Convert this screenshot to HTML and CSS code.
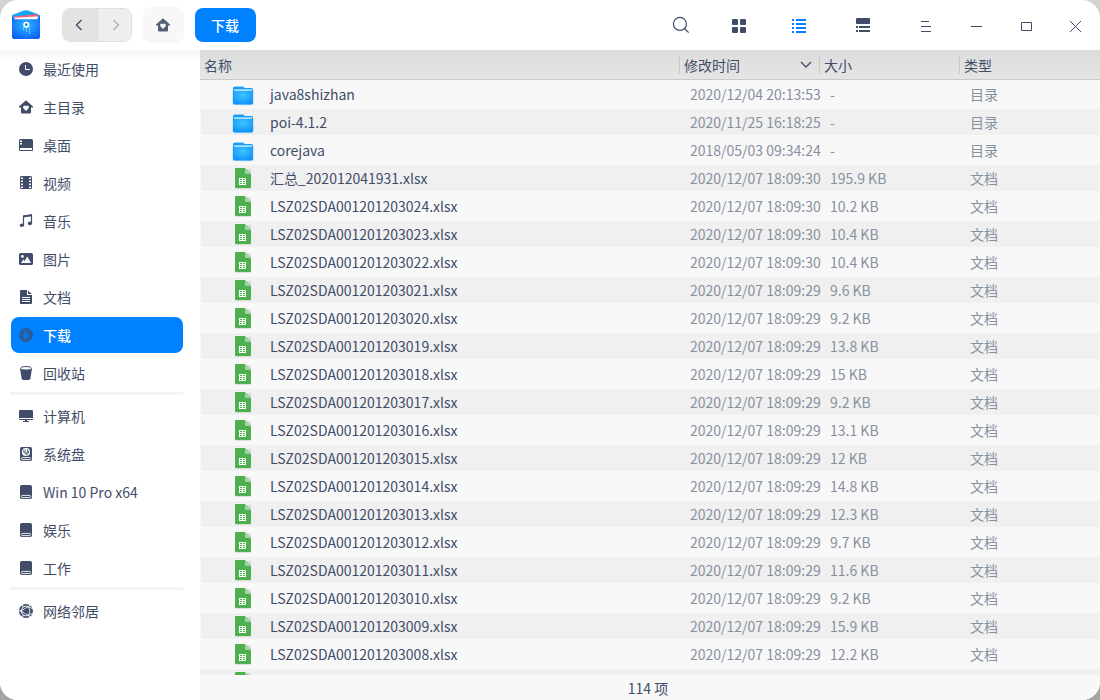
FILE: index.html
```html
<!DOCTYPE html>
<html lang="zh-CN">
<head>
	<meta charset="utf-8">
	<title>下载</title>
	<link rel="stylesheet" href="styles.css">
</head>
<body>

<svg class="defs">
	<defs>
		<linearGradient id="folder_back" x1="0" y1="0" x2="0" y2="1">
			<stop offset="0" stop-color="#1fa6f8"/>
			<stop offset="1" stop-color="#0a7df0"/>
		</linearGradient>
		<radialGradient id="folder_front" cx="0.5" cy="0.3" r="0.75">
			<stop offset="0" stop-color="#3cc4ff"/>
			<stop offset="1" stop-color="#0f90fa"/>
		</radialGradient>
		<radialGradient id="logo_front" cx="0.5" cy="0.4" r="0.7">
			<stop offset="0" stop-color="#2cb8ff"/>
			<stop offset="1" stop-color="#0a5cf5"/>
		</radialGradient>
	</defs>
	<symbol id="i-home" viewBox="0 0 14 14">
		<path fill-rule="evenodd" d="M7 0.3L14 6.6V7.6H12V12.6Q12 13.6 11 13.6H3Q2 13.6 2 12.6V7.6H0V6.6ZM7 10.9L9.6 8.2Q10.4 7 9.4 6Q8.2 5.1 7 6.3Q5.8 5.1 4.6 6Q3.6 7 4.4 8.2Z"/>
	</symbol>
	<symbol id="i-clock" viewBox="0 0 14 14">
		<circle cx="7" cy="7" r="7"/>
		<path d="M6.5 3V7.5H11" fill="none" stroke="#fff"/>
	</symbol>
	<symbol id="i-desktop" viewBox="0 0 14 14">
		<rect y="1" width="14" height="12" rx="1.5"/>
		<path d="M1 2.5h2v1.5H1zM1 5h2v1.5H1zM1 10h12v2H1z" fill="#fff"/>
	</symbol>
	<symbol id="i-video" viewBox="0 0 14 14">
		<rect x="1" width="12" height="13" rx="1.5"/>
		<path d="M2 1.5h2v1.5H2zM2 4.5h2V6H2zM2 7.5h2V9H2zM2 10.5h2V12H2zM10 1.5h2v1.5h-2zM10 4.5h2V6h-2zM10 7.5h2V9h-2zM10 10.5h2V12h-2z" fill="#fff"/>
	</symbol>
	<symbol id="i-music" viewBox="0 0 14 14">
		<path d="M4.5 11V2.3L12.5 1V9.5" fill="none" stroke="currentColor" stroke-width="1.2"/>
		<path d="M4 1.4L13 0.2V2.2L4 3.4Z"/>
		<ellipse cx="2.9" cy="11.2" rx="2.1" ry="1.8"/>
		<ellipse cx="10.9" cy="9.4" rx="2.1" ry="1.8"/>
	</symbol>
	<symbol id="i-image" viewBox="0 0 14 14">
		<rect y="1" width="14" height="12" rx="1.6"/>
		<circle cx="3.4" cy="4.4" r="1.4" fill="#fff"/>
		<path d="M2 11L4.3 7.5L5.6 9L8.3 4.5L12 11Z" fill="#fff"/>
	</symbol>
	<symbol id="i-doc" viewBox="0 0 14 14">
		<path d="M2 0H8V5H13V13Q13 14 12 14H2Q1 14 1 13V1Q1 0 2 0ZM9 0.5L12.7 4H9Z"/>
		<path d="M3 7.5h8M3 9.5h8M3 11.5h8" stroke="#fff"/>
	</symbol>
	<symbol id="i-download" viewBox="0 0 14 14">
		<circle cx="7" cy="7" r="7"/>
		<path d="M5 3h4v1H5zM5 5h4v2h2.2L7 11.2 2.8 7H5z" fill="#1273d8"/>
	</symbol>
	<symbol id="i-trash" viewBox="0 0 14 14">
		<path d="M1 2.3L2.6 12.6Q2.9 14 4.3 14H9.7Q11.1 14 11.4 12.6L13 2.3Z"/>
		<ellipse cx="7" cy="2.3" rx="5.5" ry="1.8" fill="#fff" stroke="currentColor"/>
	</symbol>
	<symbol id="i-computer" viewBox="0 0 14 14">
		<path d="M1.2 1H12.8Q14 1 14 2.2V9H0V2.2Q0 1 1.2 1ZM0 10H14V11H8V12H10V13H4V12H6V11H0Z"/>
	</symbol>
	<symbol id="i-disk" viewBox="0 0 14 14">
		<rect x="1" width="12" height="14" rx="1.8"/>
		<rect x="2.4" y="10.4" width="9.2" height="2.2" rx="1" fill="none" stroke="#fff" stroke-width="0.9"/>
	</symbol>
	<symbol id="i-sysdisk" viewBox="0 0 14 14">
		<rect x="1" width="12" height="14" rx="1.8"/>
		<circle cx="7" cy="5" r="4.1" fill="#fff"/>
		<path d="M4.3 3.1Q4.5 6.4 8 7.6M5.9 2.6Q5.2 5 8.1 6.2Q9.6 4.7 8.2 2.4M9.8 3.5Q10.2 6.6 7.4 8" fill="none" stroke="currentColor" stroke-width="0.9"/>
		<rect x="2.4" y="10.6" width="9.2" height="2" rx="1" fill="none" stroke="#fff" stroke-width="0.9"/>
	</symbol>
	<symbol id="i-network" viewBox="0 0 14 14">
		<circle cx="7" cy="7" r="7"/>
		<path d="M3.4 0.5L4 3L1.8 7L4 11L3.4 13.5M0 7H1.8M4 3Q7 1.4 9.6 2.6L11 0.8M9.6 2.6Q12 7 9.6 11.4L11 13.2M9.6 11.4Q7 12.6 4 11M9.6 2.6L14 5M9.6 11.4L14 9M1.8 7L9.6 2.6M1.8 7L9.6 11.4" fill="none" stroke="#fff" stroke-width="0.9"/>
		<circle cx="7.6" cy="7" r="2.6"/>
	</symbol>
	<symbol id="i-folder" viewBox="0 0 22 20">
		<path d="M0.3 4.5H21.7V16.8Q21.7 19.3 19.2 19.3H2.8Q0.3 19.3 0.3 16.8Z" fill="#b5dcfa"/>
		<path d="M1 2Q1 0.4 2.6 0.4H10.4Q11.6 0.4 12.2 1.2L12.8 2H19.4Q21 2 21 3.6V10H1Z" fill="url(#folder_back)"/>
		<path d="M1 5H21V16.5Q21 18.4 19 18.4H3Q1 18.4 1 16.5Z" fill="url(#folder_front)"/>
		<path d="M2 3.2H20V5H2Z" fill="#a9e2ff"/>
	</symbol>
	<symbol id="i-sheet" viewBox="0 0 16 21">
		<rect y="1" width="16" height="20" rx="1" fill="#000" opacity="0.1"/>
		<path d="M1 0H10L16 6V19Q16 20 15 20H1Q0 20 0 19V1Q0 0 1 0Z" fill="#4caf50"/>
		<path d="M10 0L16 6H11Q10 6 10 5Z" fill="#a2d5a4"/>
		<path d="M4 10h7v7H4z" fill="#fff"/>
		<path d="M5 11h2v1H5zM8 11h2v1H8zM5 13h2v1H5zM8 13h2v1H8zM5 15h2v1H5zM8 15h2v1H8z" fill="#4caf50"/>
	</symbol>
</svg>

<div class="window">
	<header class="titlebar">
		<svg class="logo" viewBox="0 0 28 30">
			<path d="M0 6Q0 4.8 1.3 4.4L12 0.6Q14 0 16 0.6L26.7 4.4Q28 4.8 28 6V14H0Z" fill="#12a5ef"/>
			<path d="M2 6.4L24 4.2Q26 4.2 26 6V9H2Z" fill="#fb5d78"/>
			<path d="M2.5 7.8L24.5 6.6Q26 6.6 26 7.6V10H2.5Z" fill="#fff"/>
			<path d="M0 6L2.5 8.8Q3 9.3 4 9.3H24Q25 9.3 25.5 8.8L28 6V27Q28 29 26 29H2Q0 29 0 27Z" fill="url(#logo_front)"/>
			<path d="M11.5 20.5V16.5M14.5 17V22M17.5 17V24" stroke="#6cc8ff"/>
			<circle cx="14.3" cy="14.7" r="2.2" fill="#0b88f5" stroke="#fff" stroke-width="1.7"/>
		</svg>
		<div class="nav-group">
			<div class="nav-button"><svg width="8" height="12" viewBox="0 0 8 12"><path d="M6.5 1L1.5 6L6.5 11"/></svg></div>
			<div class="nav-button nav-disabled"><svg width="8" height="12" viewBox="0 0 8 12"><path d="M1.5 1L6.5 6L1.5 11"/></svg></div>
		</div>
		<div class="home-button"><svg class="icon"><use href="#i-home"/></svg></div>
		<div class="crumb">下载</div>
		<div class="tools">
			<div class="tool tool-search"><svg width="18" height="18" viewBox="0 0 18 18"><circle cx="7.9" cy="7.9" r="6.5" class="line"/><path d="M12.5 12.5L16.7 16.7" class="line"/></svg></div>
			<div class="tool tool-grid"><svg width="14" height="14"><rect width="6" height="6" rx="1"/><rect x="8" width="6" height="6" rx="1"/><rect y="8" width="6" height="6" rx="1"/><rect x="8" y="8" width="6" height="6" rx="1"/></svg></div>
			<div class="tool tool-list"><svg width="14" height="14"><path d="M0 0h2v2H0zM4 0h10v2H4zM0 4h2v2H0zM4 4h10v2H4zM0 8h2v2H0zM4 8h10v2H4zM0 12h2v2H0zM4 12h10v2H4z"/></svg></div>
			<div class="tool tool-detail"><svg width="14" height="14"><rect width="14" height="6" rx="1"/><path d="M0 8h2v2H0zM3 8h11v2H3zM0 12h2v2H0zM3 12h11v2H3z"/></svg></div>
			<div class="tool tool-menu"><svg width="10" height="11"><path d="M0 0h8v1H0zM0 5h10v1H0zM0 10h10v1H0z"/></svg></div>
			<div class="tool tool-min"><svg width="11" height="1"><path d="M0 0h11v1H0z"/></svg></div>
			<div class="tool tool-max"><svg width="11" height="9"><path d="M0.5 0.5h10v8H0.5z" class="line"/></svg></div>
			<div class="tool tool-close"><svg width="11" height="11" viewBox="0 0 11 11"><path d="M0 0L11 11M11 0L0 11" class="line thin"/></svg></div>
		</div>
	</header>

	<div class="content">
		<nav class="sidebar">
			<div class="place"><svg class="icon"><use href="#i-clock"/></svg>最近使用</div>
			<div class="place"><svg class="icon"><use href="#i-home"/></svg>主目录</div>
			<div class="place"><svg class="icon"><use href="#i-desktop"/></svg>桌面</div>
			<div class="place"><svg class="icon"><use href="#i-video"/></svg>视频</div>
			<div class="place"><svg class="icon"><use href="#i-music"/></svg>音乐</div>
			<div class="place"><svg class="icon"><use href="#i-image"/></svg>图片</div>
			<div class="place"><svg class="icon"><use href="#i-doc"/></svg>文档</div>
			<div class="place place-active"><svg class="icon"><use href="#i-download"/></svg>下载</div>
			<div class="place"><svg class="icon"><use href="#i-trash"/></svg>回收站</div>
			<div class="separator"></div>
			<div class="place"><svg class="icon"><use href="#i-computer"/></svg>计算机</div>
			<div class="place"><svg class="icon"><use href="#i-sysdisk"/></svg>系统盘</div>
			<div class="place"><svg class="icon"><use href="#i-disk"/></svg>Win 10 Pro x64</div>
			<div class="place"><svg class="icon"><use href="#i-disk"/></svg>娱乐</div>
			<div class="place"><svg class="icon"><use href="#i-disk"/></svg>工作</div>
			<div class="separator"></div>
			<div class="place"><svg class="icon"><use href="#i-network"/></svg>网络邻居</div>
		</nav>

		<main class="files">
			<div class="columns">
				<div class="column">名称</div>
				<div class="column">修改时间<svg class="sort" width="12" height="8" viewBox="0 0 12 8"><path d="M1 1L6 6L11 1"/></svg></div>
				<div class="column">大小</div>
				<div class="column">类型</div>
			</div>
			<div class="rows" id="rows"></div>
			<div class="status">114 项</div>
		</main>
	</div>
</div>

<script>

const FILES = [
	["java8shizhan", "2020/12/04 20:13:53", "-"],
	["poi-4.1.2", "2020/11/25 16:18:25", "-"],
	["corejava", "2018/05/03 09:34:24", "-"],
	["汇总_202012041931.xlsx", "2020/12/07 18:09:30", "195.9 KB"],
];
const SIZES = ["10.2", "10.4", "10.4", "9.6", "9.2", "13.8", "15", "9.2", "13.1", "12", "14.8", "12.3", "9.7", "11.6", "9.2", "15.9", "12.2"];

SIZES.forEach((size, i) => {
	FILES.push([`LSZ02SDA0012012030${ String(24 - i).padStart(2, "0") }.xlsx`, `2020/12/07 18:09:${ i < 3 ? 30 : 29 }`, `${ size } KB`]);
});
// the last row is cut off by the status bar, only its icon shows
FILES.push(["", "", ""]);

document.getElementById("rows").innerHTML = FILES.map(([name, time, size]) => {
	const isFolder = size == "-";
	return `<div class="row">
		<div class="cell-icon"><svg class="${ isFolder ? "folder" : "sheet" }"><use href="#${ isFolder ? "i-folder" : "i-sheet" }"/></svg></div>
		<div class="cell-name">${ name }</div>
		<div class="cell">${ time }</div>
		<div class="cell">${ size }</div>
		<div class="cell">${ name && (isFolder ? "目录" : "文档") }</div>
	</div>`;
}).join("");

</script>

</body>
</html>
```
FILE: styles.css
```css
* {
	box-sizing: border-box;
}

body {
	margin: 0;
	height: 700px;
	overflow: hidden;
	background: linear-gradient(#d2d2d2, #a4a4a4);
	color: #414d68;
	font: 14px/20px "Noto Sans CJK SC", sans-serif;
}

svg {
	display: block;
	flex: none;
	fill: currentColor;
}

.defs {
	position: absolute;
	width: 0;
	height: 0;
}

.window {
	display: flex;
	flex-direction: column;
	height: 700px;
	border-radius: 18px;
	overflow: hidden;
	background: #fff;
}

.titlebar {
	display: flex;
	align-items: center;
	height: 50px;
	padding-left: 12px;
}

.logo {
	width: 28px;
	height: 30px;
	margin-right: 22px;
}

.nav-group {
	display: flex;
	width: 70px;
	height: 34px;
	border: 1px solid #dfdfdf;
	border-radius: 8px;
	overflow: hidden;
	margin-right: 11px;
}

.nav-button {
	flex: 1;
	display: flex;
	align-items: center;
	justify-content: center;
	background: #e3e3e3;
	padding-right: 3px;
}

.nav-button path {
	fill: none;
	stroke: currentColor;
	stroke-width: 1.4;
}

.nav-disabled {
	background: #eee;
	color: #adb1b8;
	border-left: 1px solid #dcdcdc;
	padding: 0 0 0 2px;
}

.home-button {
	display: flex;
	align-items: center;
	justify-content: center;
	width: 41px;
	height: 36px;
	padding-right: 1px;
	border-radius: 8px;
	background: #f8f8f8;
	color: #536076;
	margin-right: 11px;
}

.crumb {
	width: 61px;
	height: 34px;
	line-height: 34px;
	padding-right: 1px;
	border-radius: 8px;
	background: #0081ff;
	color: #fff;
	font-weight: 500;
	text-align: center;
}

.tools {
	display: flex;
	align-items: center;
	margin-left: auto;
}

.tool {
	display: flex;
	justify-content: center;
	width: 50px;
	padding-top: 2px;
}

.tool .line {
	fill: none;
	stroke: currentColor;
	stroke-width: 1.2;
}

.tool .thin {
	stroke-width: 1;
}

.tool-search {
	width: 60px;
	padding-top: 0;
}

.tool-grid {
	width: 56px;
}

.tool-list {
	width: 64px;
	color: #0081ff;
}

.tool-detail {
	width: 64px;
	padding-top: 0;
}

.tool-menu {
	margin-left: 6px;
}

.tool-max .line {
	stroke-width: 1;
}

.tool-close {
	width: 49px;
}

.content {
	display: flex;
	height: 650px;
}

.sidebar {
	display: flex;
	flex-direction: column;
	gap: 2px;
	width: 200px;
	padding: 1px 17px 0 11px;
	background: linear-gradient(#f7f7f7, #fff 14px);
}

.icon {
	width: 14px;
	height: 14px;
}

.place {
	display: flex;
	align-items: center;
	gap: 10px;
	height: 36px;
	padding-left: 8px;
	border-radius: 8px;
}

.place-active {
	background: #0081ff;
	color: #fff;
	font-weight: 500;
}

.place-active .icon {
	color: #2a5c9c;
}

.separator {
	height: 3px;
	margin: -1px 0 1px -1px;
	background: #f4f4f4;
}

.files {
	display: flex;
	flex-direction: column;
	width: 900px;
	background: #f8f8f8;
}

.columns {
	display: grid;
	grid-template-columns: 479px 140px 140px 1fr;
	align-items: center;
	height: 30px;
	background: linear-gradient(#dcdcdc, #e5e5e5);
	border-bottom: 1px solid #c9c9c9;
}

.column {
	display: flex;
	align-items: center;
	height: 18px;
	padding: 0 7px 0 4px;
	border-left: 1px solid #c9c9c9;
}

.column:first-child {
	border-left: 0;
}

.sort {
	margin-left: auto;
}

.sort path {
	fill: none;
	stroke: currentColor;
	stroke-width: 1.3;
}

.rows {
	height: 595px;
	padding: 1px 1px 0;
	overflow: hidden;
}

.row {
	display: grid;
	grid-template-columns: 69px 420px 140px 140px 1fr;
	align-items: center;
	height: 26px;
	margin-bottom: 2px;
}

.row:nth-child(even) {
	background: #f0f0f0;
}

.cell-icon {
	display: flex;
	justify-content: center;
	padding-left: 15px;
}

.cell {
	color: #8790a0;
	white-space: nowrap;
}

.folder {
	width: 22px;
	height: 20px;
	margin-top: 3px;
}

.sheet {
	width: 16px;
	height: 21px;
}

.status {
	height: 25px;
	line-height: 27px;
	padding-right: 4px;
	text-align: center;
}
```
